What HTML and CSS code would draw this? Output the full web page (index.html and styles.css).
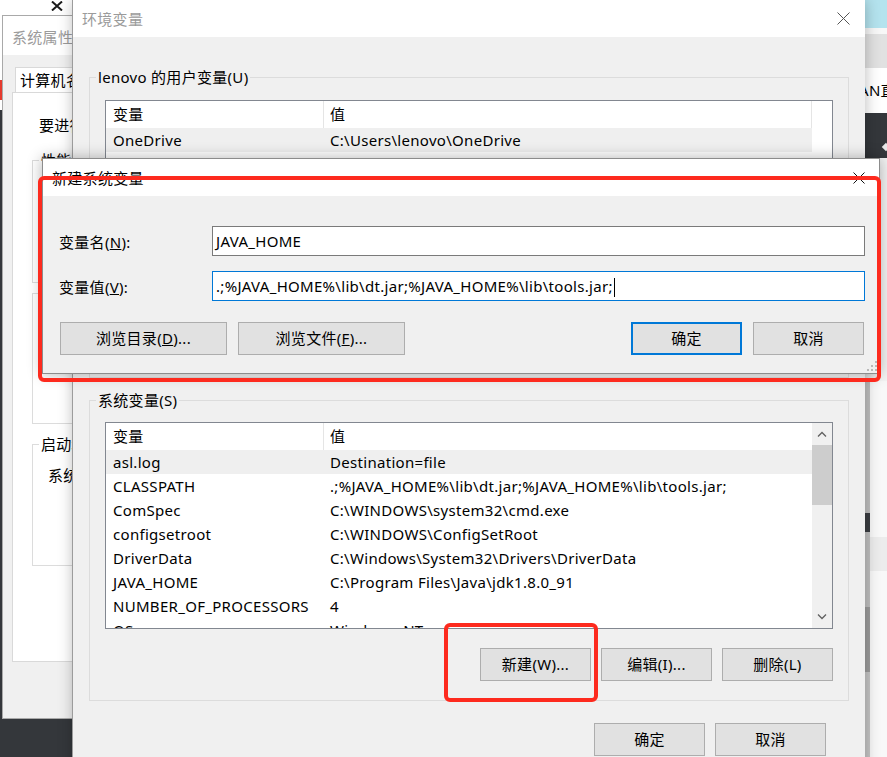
FILE: index.html
```html
<!DOCTYPE html>
<html lang="zh-CN">
<head>
<meta charset="utf-8">
<title>环境变量</title>
<link rel="stylesheet" href="styles.css">
</head>
<body>
<div class="desktop">

  <div class="bg-left">
    <svg class="bg-x" width="12" height="10" viewBox="0 0 12 10"><path d="M1 0.5 L11 9.5 M11 0.5 L1 9.5" stroke="#1b1b1b" stroke-width="2"/></svg>
    <span class="bg-red"></span>
  </div>

  <div class="bg-right">
    <div class="br-blue"></div>
    <div class="br-white"></div>
    <div class="br-gray"></div>
    <div class="br-text"><span>AN直</span></div>
    <div class="br-dark"><span class="br-dot"></span></div>
    <div class="br-mid"></div>
    <div class="br-low">
      <div class="br-rail"><i class="r1"></i><i class="r2"></i><i class="r3"></i><i class="r4"></i><i class="r5"></i></div>
      <div class="br-page"><i class="p1"></i><i class="p2"></i><i class="p3"></i></div>
    </div>
  </div>

  <div class="win sysprop">
    <div class="titlebar"><span class="title inactive">系统属性</span></div>
    <div class="sp-body">
      <div class="tabs"><span class="tab active">计算机名</span><span class="tab">硬件</span><span class="tab">高级</span></div>
      <div class="tabpanel">
        <p class="sp-note">要进行大多数更改，你必须作为管理员登录。</p>
        <fieldset class="gbox sp-g1"><legend>性能</legend></fieldset>
        <fieldset class="gbox sp-g2"><legend>用户配置文件</legend></fieldset>
        <fieldset class="gbox sp-g3"><legend>启动和故障恢复</legend><p class="sp-g3-text">系统启动、系统故障和调试信息</p></fieldset>
      </div>
    </div>
  </div>

  <div class="win envwin">
    <div class="titlebar">
      <span class="title inactive">环境变量</span>
      <svg class="close" width="13" height="13" viewBox="0 0 13 13"><path d="M0.5 0.5 L12.5 12.5 M12.5 0.5 L0.5 12.5" stroke="#555" stroke-width="1"/></svg>
    </div>
    <div class="env-body">
      <fieldset class="gbox env-group user-group">
        <legend>lenovo 的用户变量(U)</legend>
        <div class="lv">
          <div class="lv-main">
            <div class="lv-head"><span class="c1">变量</span><span class="c2 end">值</span></div>
            <div class="lv-row sel"><span class="c1">OneDrive</span><span class="c2">C:\Users\lenovo\OneDrive</span></div>
            <div class="lv-row"><span class="c1">Path</span><span class="c2">C:\Users\lenovo\AppData\Local\Microsoft\WindowsApps;</span></div>
            <div class="lv-row"><span class="c1">TEMP</span><span class="c2">%USERPROFILE%\AppData\Local\Temp</span></div>
            <div class="lv-row"><span class="c1">TMP</span><span class="c2">%USERPROFILE%\AppData\Local\Temp</span></div>
          </div>
          <div class="vscroll blank"></div>
        </div>
        <div class="btn-row">
          <button class="btn">新建(N)...</button>
          <button class="btn">编辑(E)...</button>
          <button class="btn">删除(D)</button>
        </div>
      </fieldset>

      <fieldset class="gbox env-group sys-group">
        <legend>系统变量(S)</legend>
        <div class="lv">
          <div class="lv-main">
            <div class="lv-head"><span class="c1">变量</span><span class="c2">值</span></div>
            <div class="lv-row sel"><span class="c1">asl.log</span><span class="c2">Destination=file</span></div>
            <div class="lv-row"><span class="c1">CLASSPATH</span><span class="c2">.;%JAVA_HOME%\lib\dt.jar;%JAVA_HOME%\lib\tools.jar;</span></div>
            <div class="lv-row"><span class="c1">ComSpec</span><span class="c2">C:\WINDOWS\system32\cmd.exe</span></div>
            <div class="lv-row"><span class="c1">configsetroot</span><span class="c2">C:\WINDOWS\ConfigSetRoot</span></div>
            <div class="lv-row"><span class="c1">DriverData</span><span class="c2">C:\Windows\System32\Drivers\DriverData</span></div>
            <div class="lv-row"><span class="c1">JAVA_HOME</span><span class="c2">C:\Program Files\Java\jdk1.8.0_91</span></div>
            <div class="lv-row"><span class="c1">NUMBER_OF_PROCESSORS</span><span class="c2">4</span></div>
            <div class="lv-row"><span class="c1">OS</span><span class="c2">Windows_NT</span></div>
          </div>
          <div class="vscroll">
            <span class="sb-btn"><svg width="10" height="6" viewBox="0 0 10 6"><path d="M1 5.5 L5 1.5 L9 5.5" fill="none" stroke="#606060" stroke-width="1.3"/></svg></span>
            <span class="sb-thumb"></span>
            <span class="sb-track"></span>
            <span class="sb-btn"><svg width="10" height="6" viewBox="0 0 10 6"><path d="M1 0.5 L5 4.5 L9 0.5" fill="none" stroke="#606060" stroke-width="1.3"/></svg></span>
          </div>
        </div>
        <div class="btn-row">
          <button class="btn">新建(W)...</button>
          <button class="btn">编辑(I)...</button>
          <button class="btn">删除(L)</button>
        </div>
      </fieldset>

      <div class="env-actions">
        <button class="btn">确定</button>
        <button class="btn">取消</button>
      </div>
    </div>
  </div>

  <div class="win dialog">
    <div class="titlebar">
      <span class="title">新建系统变量</span>
      <svg class="close" width="12" height="12" viewBox="0 0 12 12"><path d="M0.5 0.5 L11.5 11.5 M11.5 0.5 L0.5 11.5" stroke="#111" stroke-width="1"/></svg>
    </div>
    <div class="dlg-body">
      <div class="dlg-row">
        <span class="dlg-label">变量名(<u>N</u>):</span>
        <div class="field">JAVA_HOME</div>
      </div>
      <div class="dlg-row second">
        <span class="dlg-label">变量值(<u>V</u>):</span>
        <div class="field focus">.;%JAVA_HOME%\lib\dt.jar;%JAVA_HOME%\lib\tools.jar;<span class="caret"></span></div>
      </div>
      <div class="dlg-buttons">
        <button class="btn wide">浏览目录(<u>D</u>)...</button>
        <button class="btn wide">浏览文件(<u>F</u>)...</button>
        <span class="spacer"></span>
        <button class="btn default">确定</button>
        <button class="btn">取消</button>
      </div>
    </div>
    <svg class="grip" width="10" height="10" viewBox="0 0 10 10">
      <rect x="8" y="0" width="2" height="2" fill="#b8b8b8"/>
      <rect x="4" y="4" width="2" height="2" fill="#b8b8b8"/>
      <rect x="8" y="4" width="2" height="2" fill="#b8b8b8"/>
      <rect x="0" y="8" width="2" height="2" fill="#b8b8b8"/>
      <rect x="4" y="8" width="2" height="2" fill="#b8b8b8"/>
      <rect x="8" y="8" width="2" height="2" fill="#b8b8b8"/>
    </svg>
  </div>

  <div class="mark mark-dialog"></div>
  <div class="mark mark-new"></div>
</div>
</body>
</html>
```

FILE: styles.css
```css
* { box-sizing: border-box; }

html, body {
  margin: 0;
  padding: 0;
}

body {
  width: 887px;
  height: 757px;
  overflow: hidden;
  background: #34373b;
  font-family: "Noto Sans", "Noto Sans CJK SC", sans-serif;
  font-size: 15px;
  letter-spacing: 0.3px;
  color: #000;
}

.desktop {
  position: relative;
  width: 887px;
  height: 757px;
  overflow: hidden;
  background: #34373b;
}

/* ---------- background windows ---------- */
.bg-left {
  position: absolute;
  left: 0;
  top: 0;
  width: 80px;
  height: 110px;
  background: #fff;
}
.bg-x {
  position: absolute;
  left: 51px;
  top: 1px;
}
.bg-red {
  position: absolute;
  left: 0;
  top: 80px;
  width: 3px;
  height: 20px;
  background: #e53a2e;
}

.bg-right {
  position: absolute;
  left: 865px;
  top: 0;
  width: 22px;
  height: 757px;
  display: flex;
  flex-direction: column;
}
.br-blue { height: 28px; background: #b4e3ee; }
.br-white { height: 6px; background: #f7f7f7; }
.br-gray { height: 34px; background: #e1e1e1; }
.br-text {
  height: 45px;
  background: #fff;
  overflow: hidden;
  white-space: nowrap;
  line-height: 45px;
  font-size: 15px;
}
.br-text span { margin-left: -6px; }
.br-dark {
  height: 45px;
  background: #34373b;
  position: relative;
}
.br-dot {
  position: absolute;
  left: 18px;
  top: 31px;
  width: 6px;
  height: 6px;
  background: #e8e8e8;
  transform: rotate(45deg);
}
.br-mid { height: 223px; background: #f3f3f3; }
.br-low { flex: 1; display: flex; }
.br-rail { width: 5px; display: flex; flex-direction: column; }
.br-rail i { display: block; }
.br-rail .r1 { height: 132px; background: #c0c0c0; }
.br-rail .r2 { height: 19px; background: #3b3e42; }
.br-rail .r3 { height: 75px; background: #c0c0c0; }
.br-rail .r4 { height: 65px; background: #9d9d9d; }
.br-rail .r5 { flex: 1; background: #c6c6c6; }
.br-page { flex: 1; display: flex; flex-direction: column; }
.br-page i { display: block; }
.br-page .p1 { height: 156px; background: #f8f8f8; }
.br-page .p2 { height: 34px; background: #ececec; }
.br-page .p3 { flex: 1; background: #f8f8f8; }

/* ---------- generic window ---------- */
.win {
  position: absolute;
  display: flex;
  flex-direction: column;
  background: #f0f0f0;
}
.titlebar {
  flex: none;
  display: flex;
  align-items: center;
  justify-content: space-between;
  background: #fff;
  white-space: nowrap;
}
.title { line-height: 20px; }
.title.inactive { color: #9b9b9b; }

.gbox {
  margin: 0;
  padding: 0;
  min-width: 0;
  border: 1px solid #dcdcdc;
}
.gbox > legend {
  margin-left: 6px;
  padding: 0 2px;
  height: 20px;
  line-height: 20px;
  white-space: nowrap;
}

.btn {
  flex: none;
  width: 111px;
  height: 33px;
  margin: 0;
  padding: 0;
  background: #e1e1e1;
  border: 1px solid #adadad;
  border-radius: 0;
  font: inherit;
  letter-spacing: inherit;
  color: #000;
  line-height: 31px;
}
.btn.wide { width: 167px; }
.btn.default { border: 2px solid #0078d7; line-height: 29px; }

/* ---------- 系统属性 ---------- */
.sysprop {
  left: 3px;
  top: 16px;
  width: 420px;
  height: 702px;
  box-shadow: 0 0 0 1px #a9a9a9;
}
.sysprop .titlebar {
  height: 39px;
  padding: 2px 0 0 9px;
}
.sp-body {
  flex: 1;
  padding: 12px 0 0 9px;
}
.tabs {
  display: flex;
  margin-left: 3px;
  height: 25px;
}
.tab {
  height: 25px;
  padding: 0 6px 0 4px;
  line-height: 24px;
  background: #fff;
  border: 1px solid #d9d9d9;
  border-bottom: 0;
  white-space: nowrap;
}
.tab + .tab { background: #f0f0f0; }
.tabpanel {
  width: 400px;
  height: 570px;
  background: #fff;
  border: 1px solid #d9d9d9;
  display: flex;
  flex-direction: column;
}
.sp-note {
  margin: 22px 0 0 26px;
  line-height: 20px;
  white-space: nowrap;
}
.sp-g1, .sp-g2, .sp-g3 {
  margin-left: 19px;
  width: 350px;
  flex: none;
}
.sp-g1 { margin-top: 15px; height: 133px; }
.sp-g2 { height: 141px; }
.sp-g3 { margin-top: 10px; height: 132px; }
.sp-g3-text {
  margin: 11px 0 0 15px;
  line-height: 20px;
  white-space: nowrap;
}

/* ---------- 环境变量 ---------- */
.envwin {
  left: 73px;
  top: 0;
  width: 792px;
  height: 800px;
  box-shadow: -1px 0 0 0 #9c9c9c, 0 0 14px rgba(0, 0, 0, 0.28);
}
.envwin .titlebar {
  height: 37px;
  padding: 0 15px 0 9px;
}
.env-body {
  flex: 1;
  padding: 30px 16px 0;
}
.env-group {
  height: 311px;
  padding: 0 15px;
}
.env-group > legend { margin-left: -9px; }
.sys-group { margin-top: 12px; }
.user-group .lv { margin-top: 13px; }
.sys-group .lv { margin-top: 12px; }

.lv {
  display: flex;
  height: 207px;
  border: 1px solid #828790;
  background: #fff;
  overflow: hidden;
}
.lv-main {
  flex: 1;
  min-width: 0;
  overflow: hidden;
}
.lv-head {
  display: flex;
  height: 27px;
  line-height: 27px;
}
.lv-head .c1 { border-right: 1px solid #e5e5e5; }
.lv-head .c2.end { flex: 1; border-right: 1px solid #e5e5e5; }
.lv-row {
  display: flex;
  height: 24px;
  line-height: 24px;
  white-space: nowrap;
}
.lv-row.sel { background: #efefef; }
.c1 {
  flex: none;
  width: 218px;
  padding-left: 7px;
  white-space: nowrap;
  overflow: hidden;
}
.c2 {
  padding-left: 6px;
  white-space: nowrap;
}

.vscroll {
  flex: none;
  width: 20px;
  display: flex;
  flex-direction: column;
  background: #f0f0f0;
}
.vscroll.blank { background: #fff; }
.sb-btn {
  flex: none;
  height: 22px;
  display: flex;
  align-items: center;
  justify-content: center;
}
.sb-thumb {
  flex: none;
  height: 60px;
  background: #cdcdcd;
}
.sb-track { flex: 1; }

.btn-row {
  display: flex;
  justify-content: flex-end;
  gap: 10px;
  margin-top: 19px;
}
.env-actions {
  display: flex;
  justify-content: flex-end;
  gap: 10px;
  margin-top: 22px;
  padding-right: 23px;
}

/* ---------- 新建系统变量 ---------- */
.dialog {
  left: 42px;
  top: 158px;
  width: 838px;
  height: 216px;
  border: 1px solid #8c8c8c;
  box-shadow: 0 0 14px rgba(0, 0, 0, 0.3);
}
.dialog .titlebar {
  height: 37px;
  padding: 0 14px 0 9px;
}
.dlg-body {
  flex: 1;
  padding: 30px 14px 0 16px;
}
.dlg-row {
  display: flex;
  align-items: center;
  height: 30px;
}
.dlg-row.second { margin-top: 15px; }
.dlg-label {
  flex: none;
  width: 153px;
  white-space: nowrap;
}
.field {
  flex: 1;
  height: 30px;
  padding-left: 3px;
  line-height: 28px;
  background: #fff;
  border: 1px solid #7a7a7a;
  white-space: nowrap;
  overflow: hidden;
}
.field.focus { border-color: #0078d7; }
.caret {
  display: inline-block;
  width: 1px;
  height: 19px;
  margin-left: 1px;
  background: #000;
  vertical-align: middle;
}
.dlg-buttons {
  display: flex;
  gap: 11px;
  margin-top: 21px;
  padding: 0 1px;
}
.spacer { flex: 1; }
.grip {
  position: absolute;
  right: 2px;
  bottom: 2px;
}

/* ---------- red annotations ---------- */
.mark {
  position: absolute;
  border: 4px solid #fd2a1e;
  border-radius: 6px;
}
.mark-dialog {
  left: 38px;
  top: 176px;
  width: 843px;
  height: 206px;
}
.mark-new {
  left: 444px;
  top: 623px;
  width: 154px;
  height: 79px;
}
```
